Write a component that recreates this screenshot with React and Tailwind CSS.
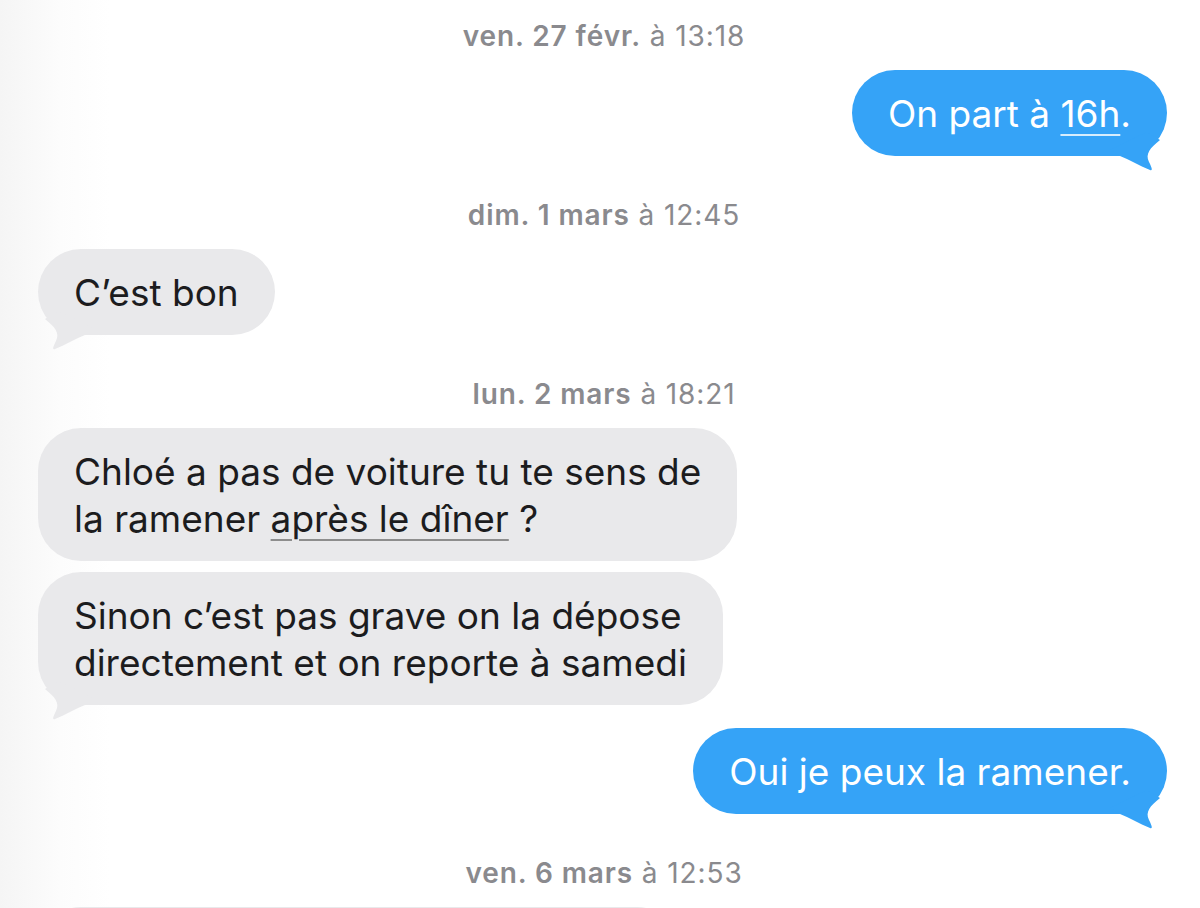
import React from "react";

const messages = [
  { type: "time", day: "ven. 27 févr.", hour: "13:18", first: true },
  { type: "out", text: <>On part à <span className="underline decoration-[1.5px] underline-offset-[7px] decoration-white/80">16h</span>.</>, tail: true },
  { type: "time", day: "dim. 1 mars", hour: "12:45" },
  { type: "in", text: "C’est bon", tail: true },
  { type: "time", day: "lun. 2 mars", hour: "18:21" },
  {
    type: "in",
    text: (
      <>
        Chloé a pas de voiture tu te sens de
        <br />
        la ramener{" "}
        <span className="underline decoration-[1.5px] underline-offset-[7px] decoration-[#8d8d8d]">après le dîner</span> ?
      </>
    ),
  },
  {
    type: "in",
    text: (
      <>
        Sinon c’est pas grave on la dépose
        <br />
        directement et on reporte à samedi
      </>
    ),
    tail: true,
    gap: true,
  },
  { type: "out", text: "Oui je peux la ramener.", tail: true, gap: true },
  { type: "time", day: "ven. 6 mars", hour: "12:53" },
];

const Tail = ({ color, side }) => (
  <svg
    width="60"
    height="40"
    viewBox="0 0 60 40"
    className={
      side === "right"
        ? "absolute right-0 bottom-[-16px]"
        : "absolute left-0 bottom-[-16px] -scale-x-100"
    }
  >
    <path
      d="M3 18 L13 24 C23 28 33 34 43 38 C46 39 45 36 42 30 C38 22 43 16 53 8 L40 0 Z"
      fill={color}
    />
  </svg>
);

const Timestamp = ({ day, hour, first }) => (
  <div
    className={`${first ? "mt-[21px]" : "mt-[44px]"} mb-[19px] text-center text-[28px] leading-[30px] tracking-[0.9px] text-[#8a8a8e] pl-[3px]`}
  >
    <span className="font-semibold">{day}</span> <span>à {hour}</span>
  </div>
);

const Bubble = ({ m }) => {
  const out = m.type === "out";
  return (
    <div className={`flex ${out ? "justify-end" : "justify-start"} ${m.gap ? (out ? "mt-[23px]" : "mt-[11px]") : ""}`}>
      <div
        className={`relative px-[36px] py-[19.5px] rounded-[43px] text-[37px] leading-[47px] ${
          out ? "bg-[#35a3f7] text-white" : "bg-[#e9e9eb] text-[#1c1c1e]"
        }`}
      >
        {m.tail && <Tail color={out ? "#35a3f7" : "#e9e9eb"} side={out ? "right" : "left"} />}
        <span className="relative">{m.text}</span>
      </div>
    </div>
  );
};

export default function App() {
  return (
    <div
      className="h-[908px] overflow-hidden bg-[linear-gradient(to_right,#f5f5f5,#fcfcfc_60px,#ffffff_110px)] pl-[38px] pr-[33px]"
      style={{ fontFamily: "Inter, 'Noto Sans', sans-serif" }}
    >
      {messages.map((m, i) =>
        m.type === "time" ? (
          <Timestamp key={i} {...m} />
        ) : (
          <Bubble key={i} m={m} />
        )
      )}
      {/* next incoming bubble, only its top edge is in view */}
      <div className="w-[642px] h-[86px] rounded-[43px] bg-[#e9e9eb]" />
    </div>
  );
}
